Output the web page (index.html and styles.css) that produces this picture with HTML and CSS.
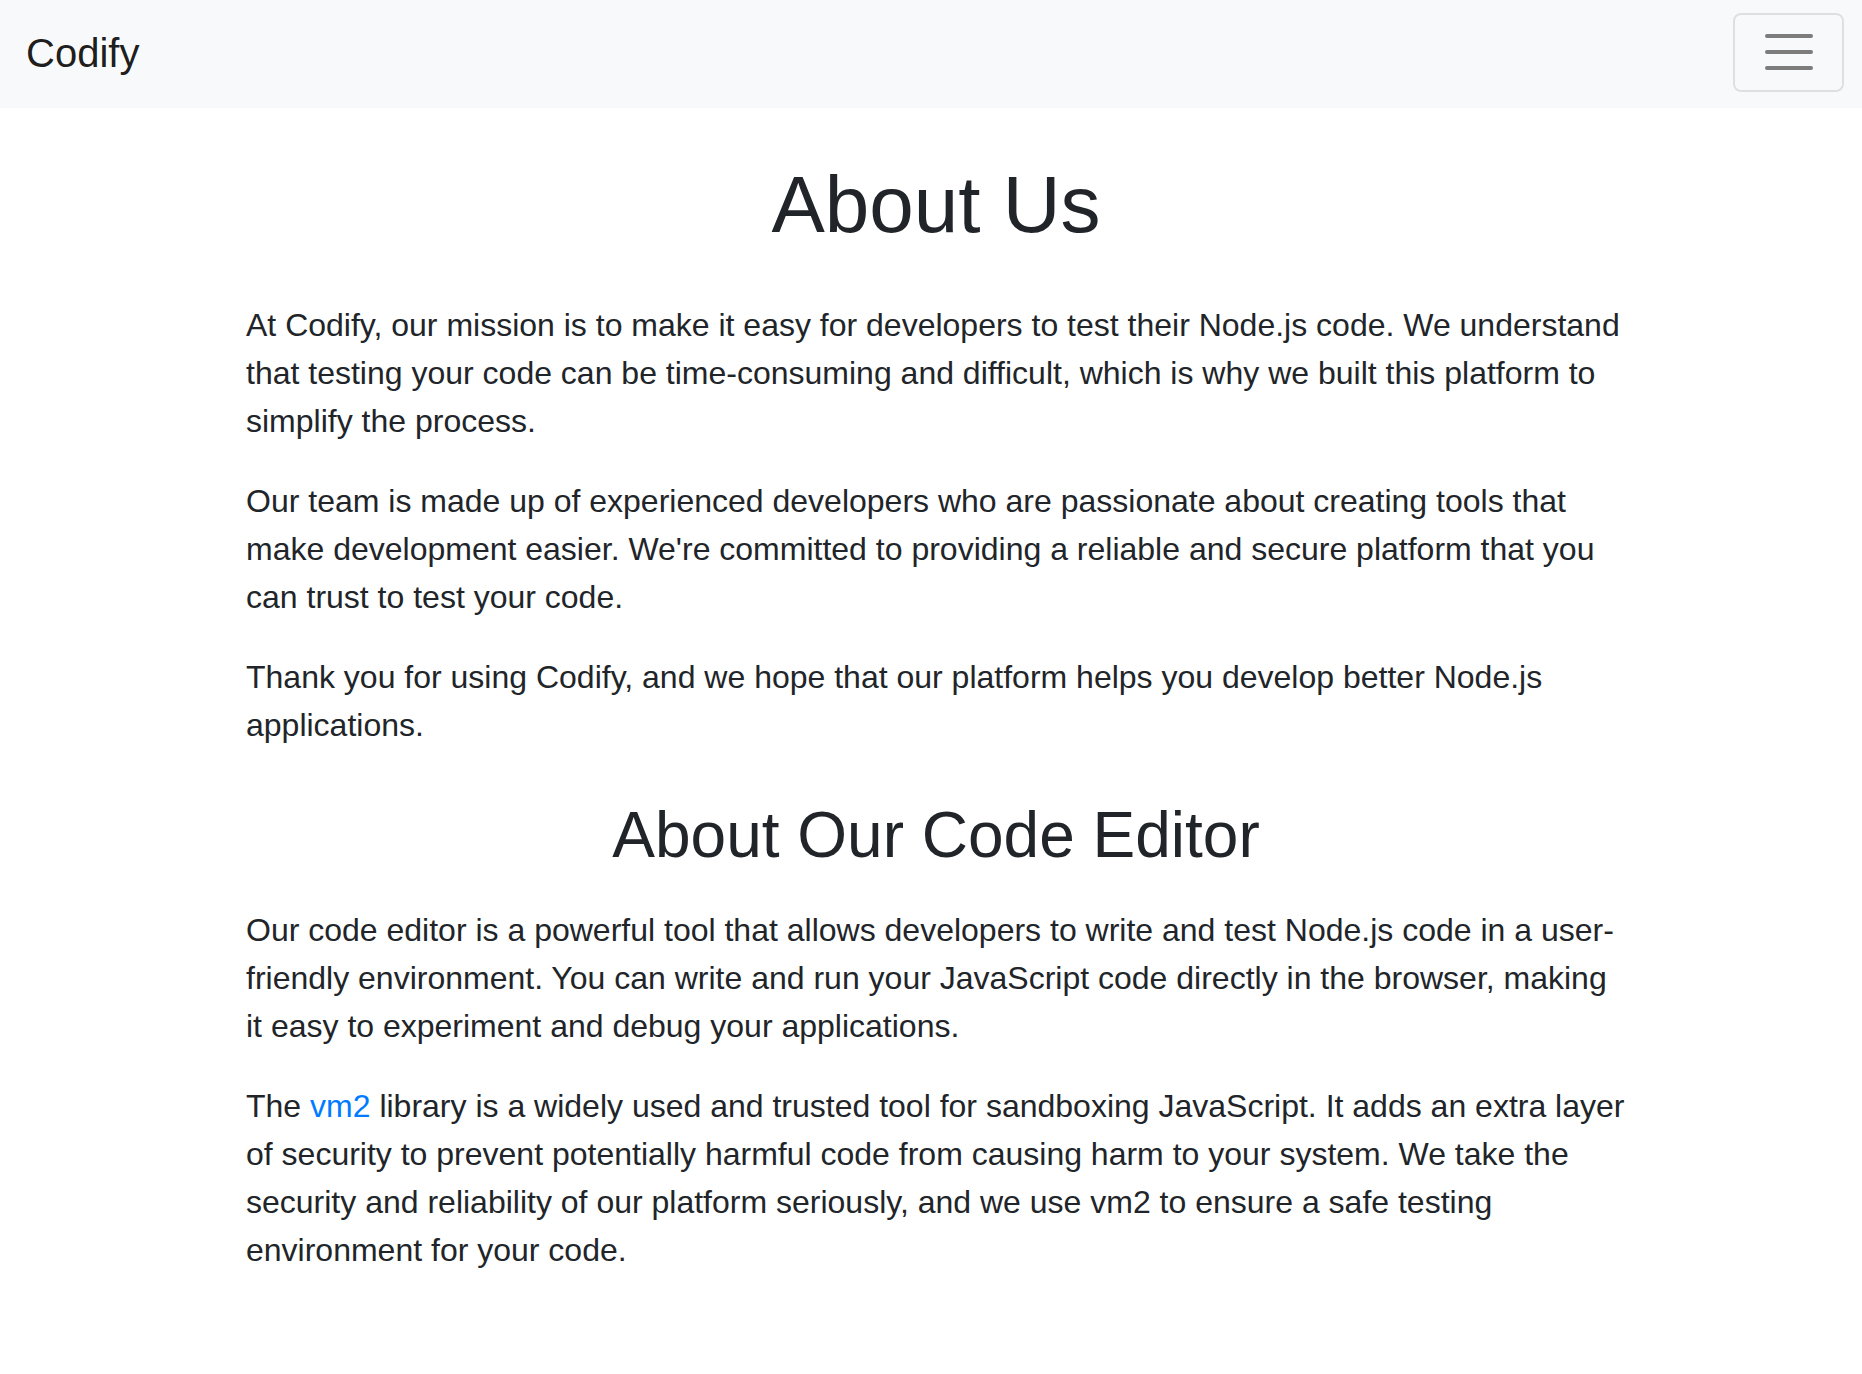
FILE: index.html
```html
<!DOCTYPE html>
<html lang="en">
<head>
<meta charset="utf-8">
<title>Codify - About</title>
<link rel="stylesheet" href="styles.css">
</head>
<body>
<nav class="navbar">
  <a class="brand" href="#">Codify</a>
  <button class="toggler" type="button" aria-label="Toggle navigation">
    <svg class="toggler-icon" width="60" height="60" viewBox="0 0 30 30" aria-hidden="true">
      <path d="M4 7h22M4 15h22M4 23h22" stroke="rgba(0,0,0,0.5)" stroke-width="2" stroke-linecap="round" stroke-miterlimit="10" fill="none"/>
    </svg>
  </button>
</nav>
<main class="content">
  <h1 class="title">About Us</h1>
  <p>At Codify, our mission is to make it easy for developers to test their Node.js code. We understand that testing your code can be time-consuming and difficult, which is why we built this platform to simplify the process.</p>
  <p>Our team is made up of experienced developers who are passionate about creating tools that make development easier. We're committed to providing a reliable and secure platform that you can trust to test your code.</p>
  <p>Thank you for using Codify, and we hope that our platform helps you develop better Node.js applications.</p>
  <h2 class="subtitle">About Our Code Editor</h2>
  <p>Our code editor is a powerful tool that allows developers to write and test Node.js code in a user-friendly environment. You can write and run your JavaScript code directly in the browser, making it easy to experiment and debug your applications.</p>
  <p>The <a class="link" href="#">vm2</a> library is a widely used and trusted tool for sandboxing JavaScript. It adds an extra layer of security to prevent potentially harmful code from causing harm to your system. We take the security and reliability of our platform seriously, and we use vm2 to ensure a safe testing environment for your code.</p>
</main>
</body>
</html>
```
FILE: styles.css
```css
* { box-sizing: border-box; }
html, body {
  margin: 0;
  padding: 0;
  background: #ffffff;
}
body {
  font-family: "Liberation Sans", Arial, sans-serif;
  font-size: 32px;
  line-height: 48px;
  color: #212529;
}
.navbar {
  display: flex;
  align-items: center;
  justify-content: space-between;
  height: 108px;
  padding: 13px 18px 16px 26px;
  background: #f8f9fa;
}
.brand {
  display: inline-block;
  font-size: 40px;
  line-height: 60px;
  padding: 10px 0;
  color: rgba(0,0,0,0.9);
  text-decoration: none;
}
.toggler {
  display: block;
  width: 111px;
  height: 79px;
  padding: 7px 24px 8px;
  background: transparent;
  border: 2px solid rgba(0,0,0,0.1);
  border-radius: 8px;
  line-height: 1;
}
.toggler-icon {
  display: block;
}
.content {
  padding: 0 236px 40px 246px;
}
.title {
  margin: 49px 0 48px;
  font-size: 80px;
  line-height: 96px;
  font-weight: 500;
  text-align: center;
}
.subtitle {
  margin: 48px 0 32px;
  font-size: 64px;
  line-height: 76.8px;
  font-weight: 500;
  text-align: center;
}
p {
  margin: 0 0 32px;
}
.link {
  color: #007bff;
  text-decoration: none;
}
```
